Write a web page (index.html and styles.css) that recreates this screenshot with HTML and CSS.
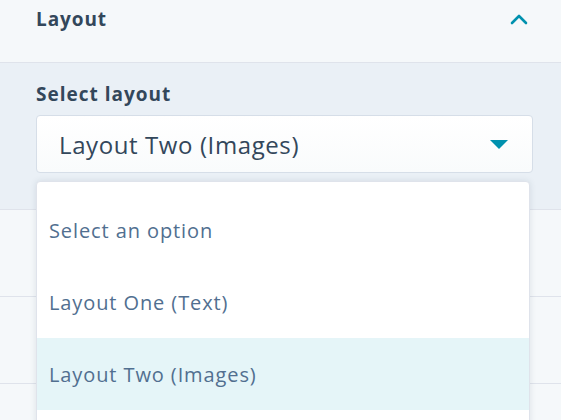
FILE: index.html
```html
<!DOCTYPE html>
<html>
<head>
<meta charset="utf-8">
<link rel="stylesheet" href="styles.css">
</head>
<body>
<div class="sidebar">
  <div class="section-head">
    <span class="section-title">Layout</span>
    <svg class="chevron" width="18" height="12" viewBox="0 0 18 12"><path d="M2 10 L9 3 L16 10" fill="none" stroke="#0091ae" stroke-width="2.6" stroke-linecap="round" stroke-linejoin="round"/></svg>
  </div>
  <div class="panel">
    <div class="field-label">Select layout</div>
    <div class="select">
      <span class="select-value">Layout Two (Images)</span>
      <svg class="caret" width="18" height="10" viewBox="0 0 18 10"><path d="M0 0 H18 L9 9 Z" fill="#0091ae"/></svg>
    </div>
  </div>
  <div class="section"></div>
  <div class="section"></div>
  <div class="section"></div>

  <ul class="dropdown">
    <li class="option">Select an option</li>
    <li class="option">Layout One (Text)</li>
    <li class="option selected">Layout Two (Images)</li>
  </ul>
</div>
</body>
</html>
```
FILE: styles.css
```css
html, body {
  margin: 0;
  padding: 0;
  background: #f5f8fa;
  font-family: "Open Sans", "Noto Sans", sans-serif;
  color: #33475b;
  overflow: hidden;
}

.sidebar {
  position: relative;
  width: 561px;
  height: 420px;
  overflow: hidden;
  background: #f5f8fa;
}

.section-head {
  height: 63px;
  border-bottom: 1px solid #dfe3eb;
  display: flex;
  align-items: flex-start;
  justify-content: space-between;
  padding: 6px 33px 0 36px;
  box-sizing: border-box;
}

.section-title {
  font-size: 19px;
  font-weight: 700;
  line-height: 26px;
  letter-spacing: 0.9px;
  color: #33475b;
}

.chevron {
  margin-top: 7px;
}

.panel {
  background: #eaf0f6;
  border-bottom: 1px solid #dfe3eb;
  height: 147px;
  box-sizing: border-box;
  padding: 18px 28px 0 36px;
}

.field-label {
  font-size: 19px;
  font-weight: 700;
  line-height: 26px;
  letter-spacing: 1px;
  margin-bottom: 8px;
}

.select {
  height: 58px;
  background: linear-gradient(#ffffff, #f9fbfc);
  border: 1px solid #d6dee8;
  border-radius: 4px;
  box-sizing: border-box;
  display: flex;
  align-items: center;
  justify-content: space-between;
  padding: 0 24px 0 22px;
}

.select-value {
  font-size: 24px;
  letter-spacing: 0.6px;
  color: #33475b;
}

.caret {
  margin-top: 2px;
}

.section {
  height: 87px;
  border-bottom: 1px solid #dfe3eb;
  box-sizing: border-box;
}

.dropdown {
  position: absolute;
  top: 181px;
  left: 36px;
  width: 494px;
  height: 260px;
  margin: 0;
  padding: 12px 0 0 0;
  list-style: none;
  background: #ffffff;
  border: 1px solid #dfe3eb;
  border-radius: 4px;
  box-sizing: border-box;
  box-shadow: 0 0 6px rgba(45, 62, 80, 0.12);
}

.option {
  height: 72px;
  display: flex;
  align-items: center;
  padding-left: 12px;
  font-size: 20px;
  letter-spacing: 0.9px;
  color: #516f90;
}

.option.selected {
  background: #e5f5f8;
}
```
